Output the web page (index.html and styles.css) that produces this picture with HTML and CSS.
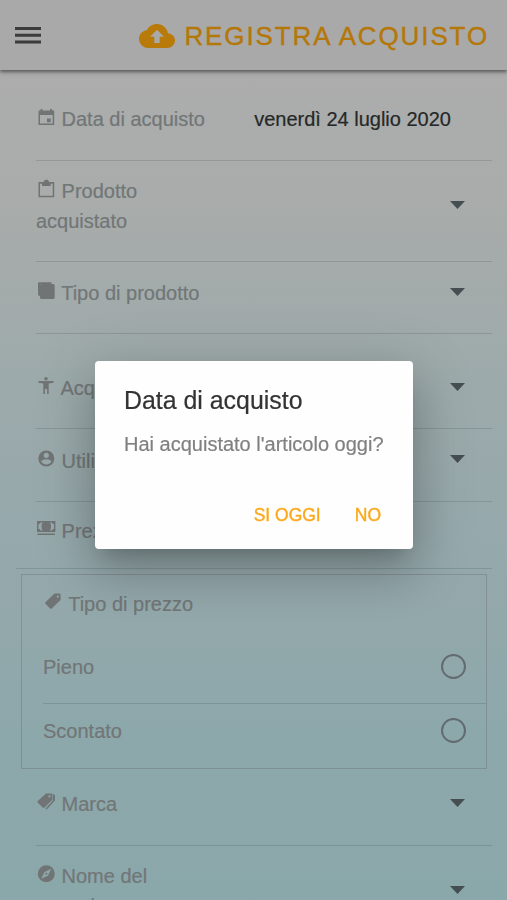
FILE: index.html
```html
<!DOCTYPE html>
<html lang="it">
<head>
<meta charset="utf-8">
<title>Registra acquisto</title>
<link rel="stylesheet" href="styles.css">
</head>
<body>
<header class="toolbar">
  <svg class="menu" viewBox="0 0 26 18"><path d="M0 0h26v3H0zM0 6.800h26v3H0zM0 13.600h26v3H0z"/></svg>
  <h1 class="heading">
    <svg class="cloud" viewBox="0 0 36 24"><path fill-rule="evenodd" d="M29 9.200C28 4 23.500 0 18 0 13.500 0 9.600 2.500 7.700 6.200 3.300 6.700 0 10.200 0 14.800 0 19.800 4 24 9 24h19c4.500 0 8-3.300 8-7.500 0-4-3.100-7-7-7.300zM20.700 12.800v6.200h-5.400v-6.200h-4.300L18 5.800l7 7z"/></svg>
    <span>REGISTRA ACQUISTO</span>
  </h1>
</header>
<main class="form">
  <div class="row row-date">
    <div class="label"><svg class="icon" viewBox="0 0 20 20"><path fill-rule="evenodd" d="M4.500 2h2v1.500h7.500V2h2v1.500h2.200V18H2.500V3.500h2zM4 8v8.500h12.700V8zM11 11.500h3.700v3.700H11z"/></svg> Data di acquisto</div>
    <div class="value">venerdì 24 luglio 2020</div>
  </div>
  <div class="row row-product">
    <div class="label">
      <svg class="icon" viewBox="0 0 20 20"><path fill-rule="evenodd" d="M2.500 3h5C8 1.300 9 .8 10.300.8S12.700 1.300 13.200 3h5v15.300H2.500zM4 4.700v12h12.700v-12h-2V7H6V4.700z"/></svg> Prodotto acquistato
    </div>
    <i class="arrow"></i>
  </div>
  <div class="row row-type">
    <div class="label"><svg class="icon" viewBox="0 0 20 20"><path d="M3 1.200h12.500v2H4.200v12C2.800 15 2 14.300 2 13V2.500C2 1.700 2.300 1.200 3 1.200z"/><rect x="4" y="3" width="14.700" height="15" rx="1.500"/></svg> Tipo di prodotto</div>
    <i class="arrow"></i>
  </div>
  <div class="row row-buyer">
    <div class="label"><svg class="icon" viewBox="0 0 20 20"><circle cx="10" cy="2.800" r="1.800"/><path d="M2.500 5h15v1.700l-4.800.8V18h-1.600v-5H8.900v5H7.300V7.500l-4.800-.8z"/></svg> Acquirente</div>
    <i class="arrow"></i>
  </div>
  <div class="row row-user">
    <div class="label"><svg class="icon" viewBox="0 0 20 20"><path fill-rule="evenodd" d="M10.300 1.500a8 8 0 1 1 0 16 8 8 0 0 1 0-16zm0 2.200a2.600 2.600 0 1 0 0 5.200 2.600 2.600 0 0 0 0-5.200zM5.200 12.500c1.200 2 3 3 5.100 3s3.900-1 5.100-3c-.4-1.500-3.400-2.200-5.100-2.200s-4.700.7-5.100 2.200z"/></svg> Utilizzatore</div>
    <i class="arrow"></i>
  </div>
  <div class="row row-price">
    <div class="label"><svg class="icon" viewBox="0 0 20 20"><path fill-rule="evenodd" d="M1 2h18.400v11H1zM2.500 5v5c1.300 0 2 .6 2 1.600h2.200C5.900 10.500 5.500 9 5.500 7.500s.4-3 1.200-4H4.500C4.500 4.500 3.800 5 2.500 5zM16 3.500h-2.200c.8 1 1.200 2.500 1.200 4s-.4 3-1.200 4.100H16c0-1 .7-1.600 2-1.600V5c-1.300 0-2-.5-2-1.500zM1.500 14.500h17.400V16H1.500z"/></svg> Prezzo</div>
  </div>
  <section class="group">
    <div class="group-title"><svg class="icon" viewBox="0 0 20 20"><path fill-rule="evenodd" d="M11.500 1.500H16c1 0 1.600.6 1.600 1.600v5L9 16.200c-.7.7-1.400.7-2.100 0L2.700 12c-.7-.7-.7-1.400 0-2.100zM14.800 3.500a1.100 1.100 0 1 0 0 2.200 1.100 1.100 0 0 0 0-2.200z"/></svg> Tipo di prezzo</div>
    <div class="option option-first"><span>Pieno</span><i class="radio"></i></div>
    <div class="option option-last"><span>Scontato</span><i class="radio"></i></div>
  </section>
  <div class="row row-brand">
    <div class="label"><svg class="icon" viewBox="0 0 20 20"><path fill-rule="evenodd" d="M10 1.500h5c.8 0 1.300.5 1.300 1.300v5L8.500 15.500c-.6.6-1.200.6-1.800 0L1.800 10.800c-.6-.6-.6-1.200 0-1.800zM13.500 3.300a1.100 1.100 0 1 0 0 2.200 1.100 1.100 0 0 0 0-2.200z"/><path d="M16.800 2c1.500.3 2.200 1 2.200 2.200v4.300l-7.600 8.300c-.7.7-1.500.7-2.200.1L16.800 8.500z"/></svg> Marca</div>
    <i class="arrow"></i>
  </div>
  <div class="row row-shop">
    <div class="label"><svg class="icon" viewBox="0 0 20 20"><path fill-rule="evenodd" d="M10.300 1.200a8.500 8.500 0 1 1 0 17 8.500 8.500 0 0 1 0-17zm5 3.500L8.500 7.900 5.300 14.700l6.800-3.200z"/><circle cx="10.300" cy="9.700" r="1"/></svg> Nome del negozio</div>
    <i class="arrow"></i>
  </div>
</main>
<div class="overlay">
  <div class="dialog" role="dialog">
    <h2 class="dialog-title">Data di acquisto</h2>
    <p class="dialog-text">Hai acquistato l'articolo oggi?</p>
    <div class="actions"><button>SI OGGI</button><button>NO</button></div>
  </div>
</div>
</body>
</html>
```
FILE: styles.css
```css
* { box-sizing: border-box; }
body {
  margin: 0;
  height: 900px;
  overflow: hidden;
  display: flex;
  flex-direction: column;
  font: 20px/30px "Liberation Sans", Arial, sans-serif;
  color: #717677;
  -webkit-text-stroke-width: .2px;
  background: linear-gradient(#acadac 70px, #a9acab 190px, #a3abaa 290px, #9daaab 380px, #97a9ab 500px, #93a8ab 620px, #8da8ab 730px, #8aa7aa 900px);
}
.toolbar {
  flex: none;
  height: 70px;
  padding: 1px 18px 0 15px;
  display: flex;
  align-items: center;
  justify-content: space-between;
  background: #a9a9a9;
  box-shadow: 0 2px 3px rgba(0,0,0,.4), 0 2px 7px rgba(0,0,0,.15);
}
.menu { width: 26px; height: 18px; fill: #3b3b3b; }
.heading {
  margin: 0;
  display: flex;
  align-items: center;
  gap: 9px;
  font-size: 26px;
  font-weight: 400;
  letter-spacing: 1.88px;
  color: #b47708;
  -webkit-text-stroke-width: .4px;
  white-space: nowrap;
}
.cloud { width: 36px; height: 24px; fill: #b87a08; }
.form { flex: none; display: flex; flex-direction: column; }
.row {
  flex: none;
  display: flex;
  justify-content: space-between;
  margin-left: 36px;
  margin-right: 15px;
  padding-right: 27px;
  border-bottom: 1px solid rgba(70,85,85,.23);
}
.label { width: 172px; }
.icon { width: 20px; height: 20px; vertical-align: -1px; fill: #717475; }
.value { color: #252828; white-space: nowrap; padding-right: 14px; }
.arrow {
  flex: none;
  width: 15px;
  height: 8px;
  background: #454f51;
  clip-path: polygon(0 0, 100% 0, 50% 100%);
}
.row-date { height: 91px; padding-top: 34px; }
.row-product { height: 101px; padding-top: 15px; }
.row-product .label { width: 130px; }
.row-product .arrow { margin-top: 25px; }
.row-type { height: 72px; padding-top: 16px; }
.row-type .arrow { margin-top: 10px; }
.row-buyer { height: 95px; padding-top: 39px; }
.row-buyer .arrow { margin-top: 10px; }
.row-user { height: 73px; padding-top: 17px; }
.row-user .arrow { margin-top: 9px; }
.row-price { height: 67px; padding-top: 14px; margin-left: 16px; padding-left: 20px; }
.group {
  margin: 5px 20px 0 21px;
  height: 195px;
  border: 1px solid rgba(85,80,90,.27);
  padding-left: 21px;
}
.group-title { height: 63px; padding-top: 14px; }
.option { display: flex; justify-content: space-between; padding-right: 20px; }
.option-first { height: 66px; padding-top: 14px; border-bottom: 1px solid rgba(75,85,90,.24); }
.option-last { padding-top: 12px; }
.radio { width: 25px; height: 25px; border: 2px solid #626b70; border-radius: 50%; margin-top: 2px; }
.row-brand { height: 77px; padding-top: 20px; }
.row-brand .arrow { margin-top: 10px; }
.row-shop { height: 90px; padding-top: 15px; }
.row-shop .label { width: 130px; }
.row-shop .arrow { margin-top: 25px; }
.overlay {
  position: fixed;
  inset: 0;
  display: flex;
  align-items: flex-start;
  padding: 361px 0 0 95px;
}
.dialog {
  width: 318px;
  height: 188px;
  padding: 24px 20px 0 29px;
  border-radius: 4px;
  background: #fefefe;
  box-shadow: 0 14px 19px -9px rgba(0,0,0,.2), 0 26px 48px 4px rgba(0,0,0,.14), 0 11px 58px 10px rgba(0,0,0,.12);
}
.dialog-title { margin: 0; font-size: 24.9px; font-weight: 400; color: #333; white-space: nowrap; }
.dialog-text { margin: 14px 0 0; color: #808080; white-space: nowrap; }
.actions { display: flex; justify-content: flex-end; gap: 34px; margin: 41px 12px 0 0; }
.actions button {
  padding: 0;
  border: 0;
  background: none;
  font: 17.5px/30px "Liberation Sans", Arial, sans-serif;
  color: #fca91c;
  -webkit-text-stroke: .4px #fca91c;
}
```
